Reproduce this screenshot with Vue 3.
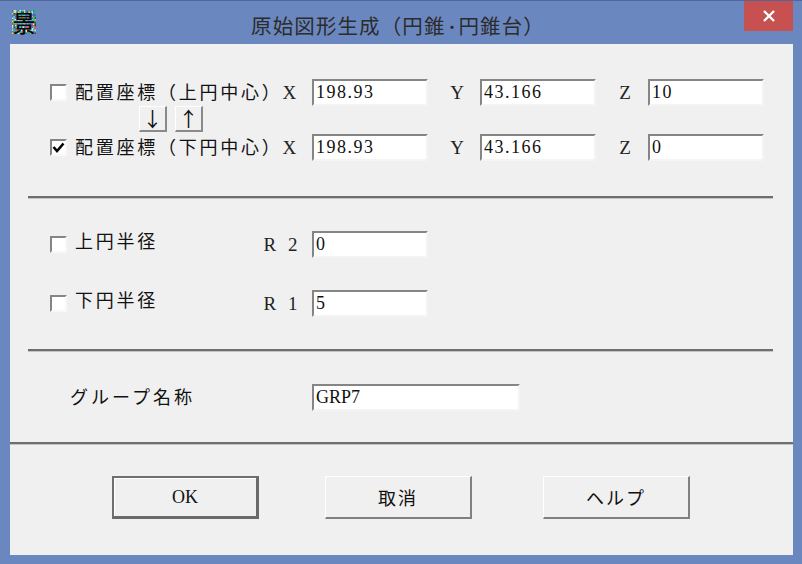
<script setup>
const palette = ['#1fd0e0', '#f0e040', '#30c040', '#e040c0', '#4060e0', '#d8e8e0', '#20a0a0', '#d06020', '#80e080', '#305030']
let seed = 7
const next = () => { seed = (seed * 9301 + 49297) % 233280; return seed / 233280 }
const noise = []
for (let y = 0; y < 24; y += 1.5) for (let x = 0; x < 24; x += 1.5) {
  noise.push({ x, y, fill: palette[Math.floor(next() * palette.length)] })
}
const coords = [
  { check: false, side: '上', x: '198.93', y: '43.166', z: '10' },
  { check: true, side: '下', x: '198.93', y: '43.166', z: '0' }
]
</script>

<template>
  <div class="window">
    <header class="titlebar">
      <div class="appicon">
        <svg width="24" height="24" viewBox="0 0 24 24">
          <rect v-for="(c, i) in noise" :key="i" :x="c.x" :y="c.y" width="1.5" height="1.5" :fill="c.fill" />
        </svg>
        <span class="appglyph">景</span>
      </div>
      <div class="title">原始図形生成（円錐<span class="dot">・</span>円錐台）</div>
      <button class="close">
        <svg width="14" height="14" viewBox="0 0 14 14"><path d="M2 2 L12 12 M12 2 L2 12" stroke="#fff" stroke-width="2.4" fill="none" /></svg>
      </button>
    </header>
    <main class="client">
      <section class="coords">
        <div class="row">
          <div class="lead">
            <span class="check"></span>
            <span class="cjk wide">配置座標（{{ coords[0].side }}円中心）</span>
            <span class="axis x">X</span>
          </div>
          <input class="field" :value="coords[0].x" readonly />
          <span class="axis gap">Y</span>
          <input class="field" :value="coords[0].y" readonly />
          <span class="axis gap">Z</span>
          <input class="field" :value="coords[0].z" readonly />
        </div>
        <div class="arrows">
          <button class="arrow">↓</button>
          <button class="arrow">↑</button>
        </div>
        <div class="row">
          <div class="lead">
            <span class="check"><svg width="13" height="13" viewBox="0 0 13 13"><path d="M1.5 6 L5 10 L11.5 2.5" stroke="#000" stroke-width="2.6" fill="none" /></svg></span>
            <span class="cjk wide">配置座標（{{ coords[1].side }}円中心）</span>
            <span class="axis x">X</span>
          </div>
          <input class="field" :value="coords[1].x" readonly />
          <span class="axis gap">Y</span>
          <input class="field" :value="coords[1].y" readonly />
          <span class="axis gap">Z</span>
          <input class="field" :value="coords[1].z" readonly />
        </div>
      </section>
      <hr class="rule" />
      <section class="radii">
        <div class="row">
          <div class="lead">
            <span class="check"></span>
            <span class="cjk wide raised">上円半径</span>
            <span class="axis r">R 2</span>
          </div>
          <input class="field" value="0" readonly />
        </div>
        <div class="row">
          <div class="lead">
            <span class="check"></span>
            <span class="cjk wide raised">下円半径</span>
            <span class="axis r">R 1</span>
          </div>
          <input class="field" value="5" readonly />
        </div>
      </section>
      <hr class="rule" />
      <section class="group">
        <span class="cjk group-label">グループ名称</span>
        <input class="field long" value="GRP7" readonly />
      </section>
      <hr class="rule full" />
      <footer class="actions">
        <button class="btn default">OK</button>
        <button class="btn cjk">取消</button>
        <button class="btn cjk">ヘルプ</button>
      </footer>
    </main>
  </div>
</template>

<style>
html, body { margin: 0; padding: 0; }
</style>

<style scoped>
.window {
  width: 802px;
  height: 564px;
  background: #6b87c0;
  border-top: 1px solid #50689c;
  box-sizing: border-box;
  display: flex;
  flex-direction: column;
  font-family: "Liberation Serif", "Noto Sans CJK JP", serif;
  color: #111;
  overflow: hidden;
}
.titlebar {
  height: 43px;
  flex: none;
  display: flex;
  align-items: flex-start;
  padding-left: 12px;
}
.appicon {
  position: relative;
  width: 24px;
  height: 24px;
  margin-top: 9px;
  flex: none;
}
.appicon svg { display: block; }
.appglyph {
  position: absolute;
  inset: 0;
  font: 500 23px/24px "Noto Sans CJK JP", sans-serif;
  text-align: center;
  color: #0a0a0a;
}
.title {
  flex: 1;
  text-align: center;
  font: 400 20.5px/24px "Noto Sans CJK JP", sans-serif;
  letter-spacing: 1.1px;
  color: #2c2c2c;
  padding-top: 12px;
  padding-left: 16px;
  white-space: nowrap;
}
.dot {
  font-size: 13px;
  font-weight: 700;
  letter-spacing: 0;
  vertical-align: 2px;
}
.close {
  width: 49px;
  height: 31px;
  margin-right: 9px;
  margin-top: -1px;
  border: 0;
  padding: 0;
  background: #c75050;
  display: flex;
  align-items: center;
  justify-content: center;
}
.client {
  flex: 1;
  margin: 0 9px 9px 10px;
  background: #f0f0f0;
  display: flex;
  flex-direction: column;
}
.coords { padding-top: 35px; }
.row {
  display: flex;
  align-items: center;
  height: 27px;
  padding-left: 40px;
}
.lead {
  width: 262px;
  flex: none;
  display: flex;
  align-items: center;
}
.check {
  width: 17px;
  height: 17px;
  box-sizing: border-box;
  flex: none;
  background: #fff;
  border-style: solid;
  border-width: 2px;
  border-color: #858585 #f8f8f8 #f8f8f8 #858585;
  display: flex;
  align-items: center;
  justify-content: center;
  margin-right: 8px;
  margin-top: -1px;
}
.check svg { display: block; }
.cjk {
  font-family: "Noto Sans CJK JP", sans-serif;
  font-weight: 400;
}
.wide {
  font-size: 18px;
  letter-spacing: 2.75px;
  white-space: nowrap;
  line-height: 24px;
  margin-top: -4px;
}
.raised { margin-top: -10px; }
.axis {
  font-size: 19px;
  color: #222;
  font-family: "Liberation Serif", serif;
}
.axis.x { margin-left: auto; margin-right: 17px; }
.axis.r { margin-left: auto; margin-right: 11px; letter-spacing: 3.5px; }
.axis.gap {
  width: 52px;
  flex: none;
  text-align: center;
  padding-left: 6px;
  box-sizing: border-box;
}
.field {
  width: 116px;
  height: 27px;
  box-sizing: border-box;
  flex: none;
  margin: 0;
  padding: 0 0 0 2px;
  outline: none;
  background: #fff;
  border-style: solid;
  border-width: 2px;
  border-color: #858585 #f4f4f4 #f4f4f4 #858585;
  font-family: "Liberation Serif", serif;
  font-size: 18px;
  letter-spacing: 1.5px;
  color: #111;
}
.long { width: 208px; letter-spacing: 0; }
.arrows {
  height: 28px;
  display: flex;
  gap: 8px;
  padding-left: 129px;
  align-items: flex-start;
}
.arrow {
  width: 28px;
  height: 26px;
  box-sizing: border-box;
  padding: 0;
  background: #f0f0f0;
  border-style: solid;
  border-width: 1px 2px 2px 1px;
  border-color: #fff #8a8a8a #8a8a8a #fff;
  font: 400 20px/22px "Noto Sans CJK JP", sans-serif;
  color: #111;
}
.rule {
  margin: 0 20px 0 18px;
  border: 0;
  height: 2px;
  flex: none;
  background: #6e6e6e;
  box-shadow: 0 1px 0 #c4c4c4;
}
.rule.full { margin: 0; }
.coords + .rule { margin-top: 35px; }
.radii {
  padding-top: 33px;
  padding-bottom: 32px;
  display: flex;
  flex-direction: column;
  gap: 32px;
}
.group {
  display: flex;
  align-items: center;
  height: 27px;
  padding: 33px 0 31px 60px;
}
.group-label {
  width: 242px;
  flex: none;
  font-size: 18px;
  letter-spacing: 3px;
  margin-top: -3px;
}
.actions {
  display: flex;
  padding: 32px 0 0 102px;
}
.btn {
  width: 147px;
  height: 43px;
  box-sizing: border-box;
  padding: 0;
  background: #f0f0f0;
  border-style: solid;
  border-width: 1px 2px 2px 1px;
  border-color: #fff #808080 #808080 #fff;
  font-size: 16px;
  color: #111;
  margin-right: 66px;
}
.btn:nth-child(3) { margin-left: 5px; }
.btn.cjk { font-size: 18px; letter-spacing: 2px; }
.btn.default {
  font-family: "Liberation Serif", serif;
  font-size: 18px;
  border-width: 2px 3px 3px 2px;
  border-color: #6f6f6f #6a6a6a #6a6a6a #6f6f6f;
  box-shadow: inset 1px 1px 0 #fff;
}
</style>
